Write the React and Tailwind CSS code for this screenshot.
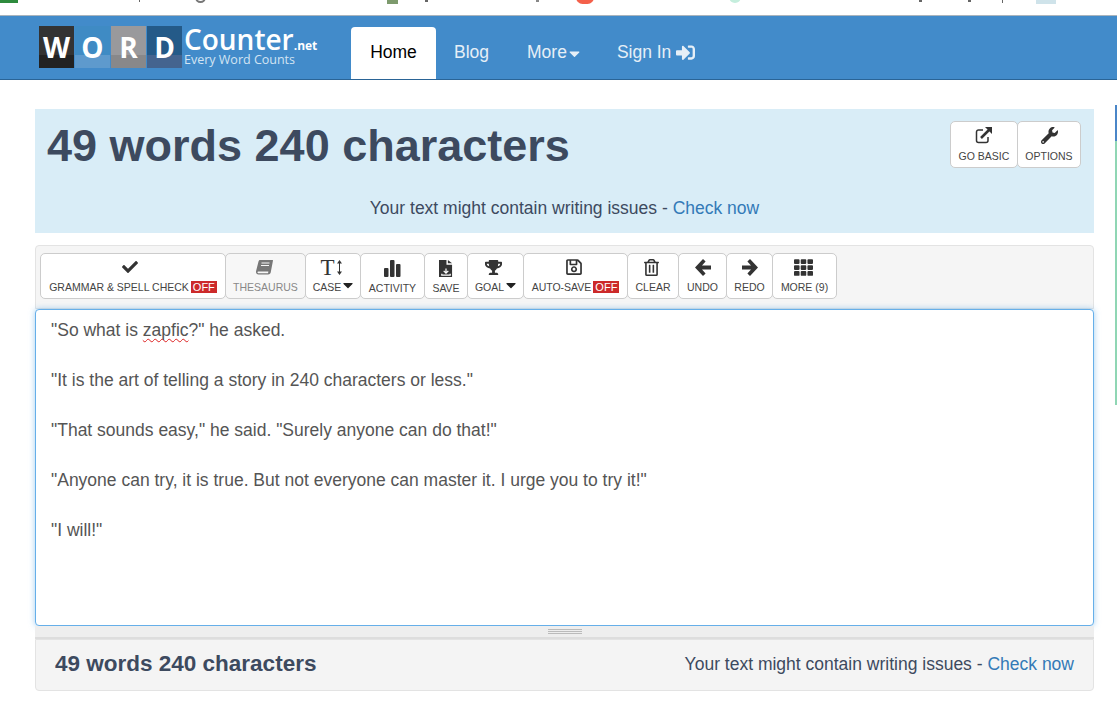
import React from "react";
import { FaCheck, FaTrophy, FaRegSave, FaRegTrashAlt, FaTh, FaWrench, FaCaretDown, FaSignInAlt } from "react-icons/fa";

function ToolBtn({ w, icon, label, off, caret, dim, pb }) {
  return (
    <div className={`${w} h-[46px] -mr-px flex flex-col items-center border border-[#ccc] rounded-[5px] ${dim ? "bg-[#f7f7f7] text-[#888]" : "bg-white text-[#444]"}`}>
      <div className="h-[26px] flex items-center justify-center text-[17px] text-[#333]">{icon}</div>
      <div className={`flex items-center whitespace-nowrap text-[10.5px] leading-[14px] ${pb || ""}`}>
        <span>{label}</span>
        {caret && <FaCaretDown className="text-[16px] -ml-[1px] -mr-[3px] -mt-[6px] -mb-[1px] text-[#222]" />}
        {off && <span className="ml-[2px] bg-[#cc2a2a] text-white px-[2px] text-[11px] leading-[12px]">OFF</span>}
      </div>
    </div>
  );
}

function Logo() {
  const cells = [
    ["W", "bg-[#333]", "bg-[#222]"],
    ["O", "bg-[#3f8bc4]", "bg-[#5e9acd]"],
    ["R", "bg-[#99999c]", "bg-[#88888a]"],
    ["D", "bg-[#245a88]", "bg-[#44648f]"],
  ];
  return (
    <div className="flex items-center h-[42px]">
      <div className="flex gap-[1px]">
        {cells.map(([l, a, b]) => (
          <div key={l} className={`relative w-[35px] h-[42px] ${a} overflow-hidden flex items-center justify-center`}>
            <div className={`absolute left-0 right-0 bottom-0 h-[13px] ${b}`} />
            <span className="relative text-white font-bold text-[28px] leading-none font-['Open_Sans',sans-serif]">{l}</span>
          </div>
        ))}
      </div>
      <div className="ml-[2px] pb-[2px] text-white font-['Open_Sans',sans-serif] flex flex-col">
        <div className="flex items-baseline h-[27px]">
          <span className="text-[28px] leading-[27px] font-semibold">Counter</span>
          <span className="text-[12px] font-bold leading-[12px]">.net</span>
        </div>
        <span className="text-[12.5px] leading-[13px] text-[#d3e4f3] whitespace-nowrap">Every Word Counts</span>
      </div>
    </div>
  );
}

const ArrowL = () => (
  <svg width="16" height="17" viewBox="0 0 16 17" fill="#333"><path d="M8 0l2.600 2.600L7 6.500h9v4H7l3.600 3.900L8 17 0 8.500z" /></svg>
);
const ArrowR = () => (
  <svg width="16" height="17" viewBox="0 0 16 17" fill="#333"><path d="M8 0L5.400 2.600 9 6.500H0v4h9l-3.600 3.900L8 17l8-8.500z" /></svg>
);

export default function App() {
  const lines = ['"It is the art of telling a story in 240 characters or less."', '"That sounds easy," he said. "Surely anyone can do that!"', '"Anyone can try, it is true. But not everyone can master it. I urge you to try it!"', '"I will!"'];
  return (
    <div className="relative w-[1117px] h-[701px] overflow-hidden bg-white font-['Liberation_Sans',Arial,sans-serif] text-[#333]">
      <div className="h-[15px] relative overflow-hidden">
        <span className="absolute left-0 top-0 w-[18px] h-[3px] bg-[#2e8b3d]" />
        <span className="absolute left-[139px] top-0 w-[1px] h-[2px] bg-[#666]" />
        <span className="absolute left-[195px] -top-[8px] w-[11px] h-[11px] rounded-full border-2 border-[#777]" />
        <span className="absolute left-[387px] top-0 w-[11px] h-[4px] bg-[#7d9a6d]" />
        <span className="absolute left-[425px] top-0 w-[3px] h-[2px] bg-[#666]" />
        <span className="absolute left-[536px] top-0 w-[3px] h-[2px] bg-[#888]" />
        <span className="absolute left-[576px] -top-[9px] w-[18px] h-[13px] rounded-full bg-[#f4604a]" />
        <span className="absolute left-[729px] -top-[9px] w-[12px] h-[12px] rounded-full bg-[#c5eedd]" />
        <span className="absolute left-[919px] top-0 w-[3px] h-[2px] bg-[#666]" />
        <span className="absolute left-[968px] top-0 w-[3px] h-[2px] bg-[#666]" />
        <span className="absolute left-[1002px] top-0 w-[1px] h-[3px] bg-[#666]" />
        <span className="absolute left-[1036px] top-0 w-[20px] h-[4px] bg-[#cfe3ea]" />
      </div>
      <header className="h-[65px] bg-[#428bca] border-t border-t-[#a9b4bd] border-b border-b-[#2a6496] flex items-end">
        <div className="ml-[39px] mb-[11px] w-[312px]"><Logo /></div>
        <nav className="flex text-[17.5px] text-[#e6eff7] h-[52px]">
          <div className="w-[85px] bg-white rounded-t-[4px] text-black flex items-center justify-center pb-[1px]">Home</div>
          <div className="ml-[18px] w-[35px] flex items-center pb-[1px] whitespace-nowrap">Blog</div>
          <div className="ml-[38px] flex items-center pb-[1px]">More<FaCaretDown className="text-[17px] -ml-[1px] mt-[1px]" /></div>
          <div className="ml-[34px] flex items-center pb-[1px] whitespace-nowrap">Sign In<FaSignInAlt className="ml-[5px] text-[19px]" /></div>
        </nav>
      </header>
      <main className="mx-[35px] w-[1059px] pt-[29px]">
        <section className="h-[124px] bg-[#d9edf7] relative">
          <h1 className="pl-[12px] pt-[10px] text-[45px] leading-[54px] font-bold text-[#3d4a5f]">49 words 240 characters</h1>
          <p className="mt-[23px] text-center text-[17.5px] leading-[24px] text-[#3d4a5f]">Your text might contain writing issues - <span className="text-[#337ab7]">Check now</span></p>
          <div className="absolute top-[12px] right-[13px] flex">
            <div className="w-[68px] h-[47px] -mr-px bg-white border border-[#ccc] rounded-[5px] flex flex-col items-center text-[#444]">
              <svg className="mt-[4px]" width="18" height="18" viewBox="0 0 18 18" fill="none" stroke="#333">
                <path d="M8 4H3.500A2 2 0 0 0 1.500 6v8.500a2 2 0 0 0 2 2H11a2 2 0 0 0 2-2V11" strokeWidth="1.500" />
                <path d="M6 12 14 4" strokeWidth="2.500" />
                <path d="M10 1h7v7z" fill="#333" stroke="none" />
              </svg>
              <span className="mt-[5px] text-[10.5px] leading-[14px] whitespace-nowrap">GO BASIC</span>
            </div>
            <div className="w-[64px] h-[47px] bg-white border border-[#ccc] rounded-[5px] flex flex-col items-center text-[#444]">
              <FaWrench className="mt-[5px] w-[17px] h-[17px] text-[#333]" />
              <span className="mt-[5px] text-[10.5px] leading-[14px]">OPTIONS</span>
            </div>
          </div>
        </section>
        <section className="mt-[12px] h-[64px] bg-[#f5f5f5] border border-[#e3e3e3] rounded-t-[4px] pl-[4px] pt-[7px] flex items-start">
          <ToolBtn w="w-[186px]" icon={<FaCheck className="-ml-[6px] text-[16px]" />} label="GRAMMAR & SPELL CHECK" off />
          <ToolBtn w="w-[81px]" dim icon={
            <svg width="17" height="15" viewBox="0 0 17 15" fill="#777" className="-ml-[3px]">
              <path d="M4 0h12.500a.5.5 0 0 1 .5.6L14.800 12c-.2 1.200-1 2.500-2.800 2.500H2.500C1 14.500 0 13.500 0 12c0-.4 0-.7.100-1L2.500 1.500C2.700.600 3.200 0 4 0z" />
              <path d="M1.500 12.200c0 .7.500 1 1.200 1h9.300l.4-1.700H2.300c-.5 0-.8.200-.8.700z" fill="#f7f7f7" />
              <path d="M5.500 3h8M5 5.500h8" stroke="#f7f7f7" fill="none" />
            </svg>
          } label="THESAURUS" />
          <ToolBtn w="w-[56px]" icon={
            <span className="flex items-center text-[#333] -ml-[4px]">
              <span className="font-['Liberation_Serif',serif] text-[23px] leading-none">T</span>
              <svg width="5" height="15" viewBox="0 0 5 15" fill="#333" className="ml-[2px]"><path d="M2.500 0 5 3.500H3v8h2L2.500 15 0 11.500h2v-8H0z" /></svg>
            </span>
          } label="CASE" caret />
          <ToolBtn w="w-[65px]" icon={
            <svg width="17" height="17" viewBox="0 0 17 17" fill="#333" className="mt-[3px]"><rect x="0" y="8" width="4.500" height="9" rx="1" /><rect x="6" y="0" width="4.500" height="17" rx="1" /><rect x="12" y="4" width="4.500" height="13" rx="1" /></svg>
          } label="ACTIVITY" pb="mt-[1px]" />
          <ToolBtn w="w-[44px]" icon={
            <svg width="14" height="19" viewBox="0 0 15 20" fill="#333" className="mt-[2px]"><path d="M0 1h8v5h6v13H0z" /><path d="M9.500 1v3.500H14z" /><path d="M7.500 10v4M5 12.500l2.500 2.500 2.500-2.500M3 15.500V17h9v-1.500" stroke="#fff" strokeWidth="1.300" fill="none" /></svg>
          } label="SAVE" pb="mt-[1px]" />
          <ToolBtn w="w-[57px]" icon={<FaTrophy className="-ml-[4px]" />} label="GOAL" caret />
          <ToolBtn w="w-[105px]" icon={<FaRegSave className="text-[18px] -ml-[4px]" />} label="AUTO-SAVE" off />
          <ToolBtn w="w-[52px]" icon={<FaRegTrashAlt className="text-[17px] -ml-[3px]" />} label="CLEAR" />
          <ToolBtn w="w-[49px]" icon={<ArrowL />} label="UNDO" />
          <ToolBtn w="w-[47px]" icon={<ArrowR />} label="REDO" />
          <ToolBtn w="w-[65px]" icon={<FaTh className="text-[19px] -ml-[3px]" />} label="MORE (9)" />
        </section>
        <section className="h-[317px] bg-white border border-[#66afe9] rounded-[4px] shadow-[0_0_6px_rgba(102,175,233,0.6)] pl-[15px] pt-[8px] text-[17.5px] leading-[25px] text-[#555]">
          <p className="h-[50px]">"So what is <span className="underline decoration-wavy decoration-[#d22] decoration-1 underline-offset-2 [text-decoration-skip-ink:none]">zapfic</span>?" he asked.</p>
          {lines.map((l) => <p key={l} className="h-[50px]">{l}</p>)}
        </section>
        <div className="h-[13px] bg-[#eee] border-b-[2px] border-b-[#ddd] flex flex-col items-center pt-[3px]">
          <span className="w-[34px] h-[1px] bg-[#bbb]" />
          <span className="w-[34px] h-[1px] bg-[#bbb] mt-[1px]" />
          <span className="w-[34px] h-[1px] bg-[#bbb] mt-[1px]" />
        </div>
        <section className="h-[52px] bg-[#f4f4f4] border border-[#e3e3e3] rounded-b-[4px] flex items-center justify-between pl-[19px] pr-[19px] pb-[2px]">
          <span className="text-[22.5px] font-bold text-[#3d4a5f]">49 words 240 characters</span>
          <span className="text-[17.5px] text-[#3d4a5f]">Your text might contain writing issues - <span className="text-[#337ab7]">Check now</span></span>
        </section>
      </main>
      <div className="absolute left-[1115px] top-[105px] w-[2px] h-[300px] bg-[#8fd6b4]">
        <div className="h-[36px] bg-[#4a86c8]" />
      </div>
    </div>
  );
}
